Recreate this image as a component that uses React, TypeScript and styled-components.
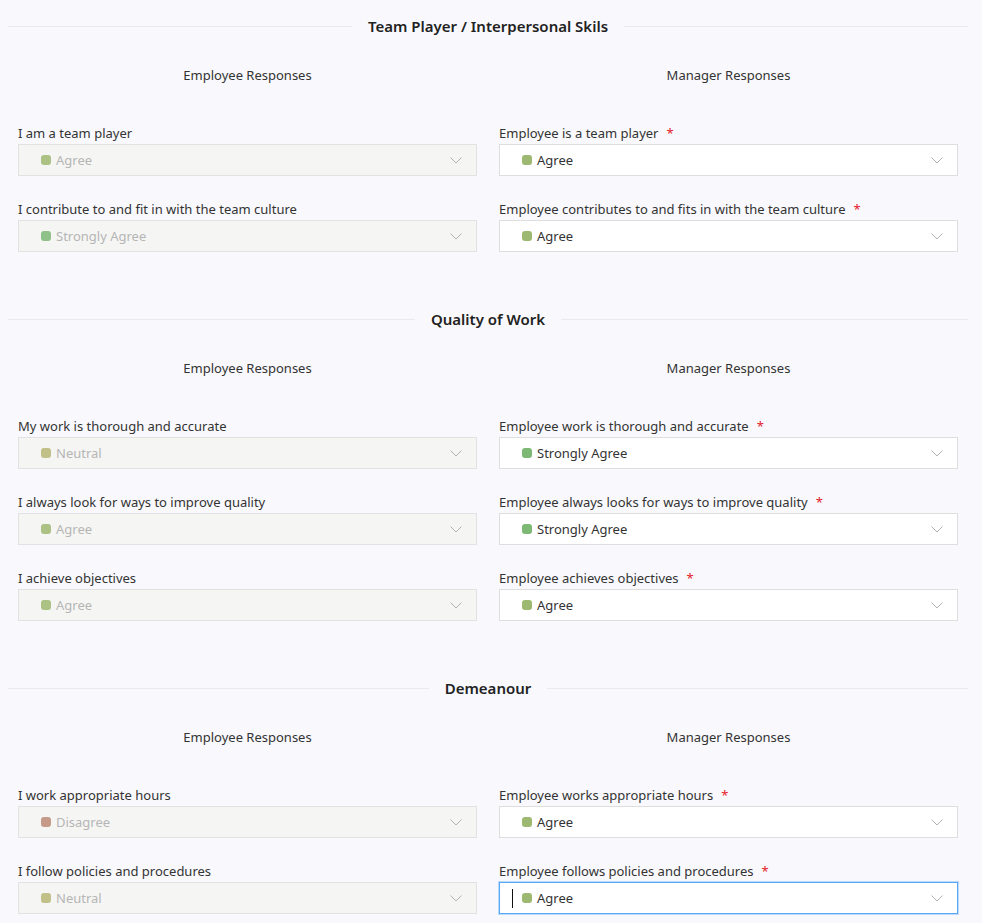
import React from "react";
import styled, { createGlobalStyle } from "styled-components";

const Global = createGlobalStyle`
  html, body { margin: 0; padding: 0; background: #f9f9fd; }
  body { font-family: "Noto Sans", "Open Sans", Arial, sans-serif; color: #333; }
`;

const Page = styled.div`
  width: 960px;
  margin-left: 8px;
  padding-top: 16px;
`;

const Section = styled.section`
  margin-bottom: 57px;
`;

const TitleBar = styled.div`
  display: flex;
  align-items: center;
  height: 20px;
`;

const Line = styled.div`
  flex: 1;
  height: 1px;
  background: #e9e9f0;
`;

const Title = styled.h2`
  margin: 0 16px;
  font-size: 15px;
  font-weight: 600;
  color: #222;
  line-height: 20px;
  white-space: nowrap;
`;

const Grid = styled.div`
  display: grid;
  grid-template-columns: 459px 459px;
  column-gap: 22px;
  row-gap: 24px;
  padding: 0 10px;
  margin-top: 30px;
`;

const ColHead = styled.div`
  text-align: center;
  font-size: 13px;
  line-height: 18px;
  color: #333;
  margin-bottom: 16px;
`;

const Field = styled.div`
  display: flex;
  flex-direction: column;
`;

const Label = styled.label`
  font-size: 13px;
  line-height: 18px;
  color: #333;
  margin-bottom: 2px;
`;

const Req = styled.span`
  color: #e5202a;
  margin-left: 8px;
`;

const SelectBox = styled.div<{ $disabled?: boolean; $focused?: boolean }>`
  position: relative;
  box-sizing: border-box;
  height: 32px;
  display: flex;
  align-items: center;
  padding: 0 14px 0 22px;
  border: 1px solid ${(p) => (p.$focused ? "#5aa8f5" : p.$disabled ? "#e2e2e2" : "#dedede")};
  box-shadow: ${(p) => (p.$focused ? "0 0 0 1px #b9dafc" : "none")};
  background: ${(p) => (p.$disabled ? "#f5f5f4" : "#fff")};
  font-size: 13px;
  color: ${(p) => (p.$disabled ? "#b5b5b5" : "#333")};
`;

const Dot = styled.span<{ $color: string; $disabled?: boolean }>`
  width: 10px;
  height: 10px;
  border-radius: 3px;
  background: ${(p) => p.$color};
  opacity: ${(p) => (p.$disabled ? 0.85 : 1)};
  margin-right: 5px;
  flex: none;
`;

const Value = styled.span`
  flex: 1;
  line-height: 18px;
`;

const Caret = styled.span`
  position: absolute;
  left: 12px;
  top: 6px;
  width: 1px;
  height: 19px;
  background: #111;
`;

const Chevron = () => (
  <svg width="12" height="7" viewBox="0 0 12 7" fill="none">
    <path d="M0.5 0.5 L6 6 L11.5 0.5" stroke="#b3b3b3" strokeWidth="1" />
  </svg>
);

const COLORS: Record<string, string> = {
  "Strongly Agree": "#7db874",
  Agree: "#9db870",
  Neutral: "#b8b675",
  Disagree: "#bd8a76",
};

type Q = { emp: string; empVal: string; mgr: string; mgrVal: string; focus?: boolean };

const Select = ({ value, disabled, focused }: { value: string; disabled?: boolean; focused?: boolean }) => (
  <SelectBox $disabled={disabled} $focused={focused}>
    {focused && <Caret />}
    <Dot $color={COLORS[value]} $disabled={disabled} />
    <Value>{value}</Value>
    <Chevron />
  </SelectBox>
);

const sections: { title: string; qs: Q[] }[] = [
  {
    title: "Team Player / Interpersonal Skils",
    qs: [
      { emp: "I am a team player", empVal: "Agree", mgr: "Employee is a team player", mgrVal: "Agree" },
      {
        emp: "I contribute to and fit in with the team culture",
        empVal: "Strongly Agree",
        mgr: "Employee contributes to and fits in with the team culture",
        mgrVal: "Agree",
      },
    ],
  },
  {
    title: "Quality of Work",
    qs: [
      {
        emp: "My work is thorough and accurate",
        empVal: "Neutral",
        mgr: "Employee work is thorough and accurate",
        mgrVal: "Strongly Agree",
      },
      {
        emp: "I always look for ways to improve quality",
        empVal: "Agree",
        mgr: "Employee always looks for ways to improve quality",
        mgrVal: "Strongly Agree",
      },
      { emp: "I achieve objectives", empVal: "Agree", mgr: "Employee achieves objectives", mgrVal: "Agree" },
    ],
  },
  {
    title: "Demeanour",
    qs: [
      {
        emp: "I work appropriate hours",
        empVal: "Disagree",
        mgr: "Employee works appropriate hours",
        mgrVal: "Agree",
      },
      {
        emp: "I follow policies and procedures",
        empVal: "Neutral",
        mgr: "Employee follows policies and procedures",
        mgrVal: "Agree",
        focus: true,
      },
    ],
  },
];

export default function App() {
  return (
    <>
      <Global />
      <Page>
        {sections.map((s) => (
          <Section key={s.title}>
            <TitleBar>
              <Line />
              <Title>{s.title}</Title>
              <Line />
            </TitleBar>
            <Grid>
              <ColHead>Employee Responses</ColHead>
              <ColHead>Manager Responses</ColHead>
              {s.qs.map((q) => (
                <React.Fragment key={q.emp}>
                  <Field>
                    <Label>{q.emp}</Label>
                    <Select value={q.empVal} disabled />
                  </Field>
                  <Field>
                    <Label>
                      {q.mgr}
                      <Req>*</Req>
                    </Label>
                    <Select value={q.mgrVal} focused={q.focus} />
                  </Field>
                </React.Fragment>
              ))}
            </Grid>
          </Section>
        ))}
      </Page>
    </>
  );
}
